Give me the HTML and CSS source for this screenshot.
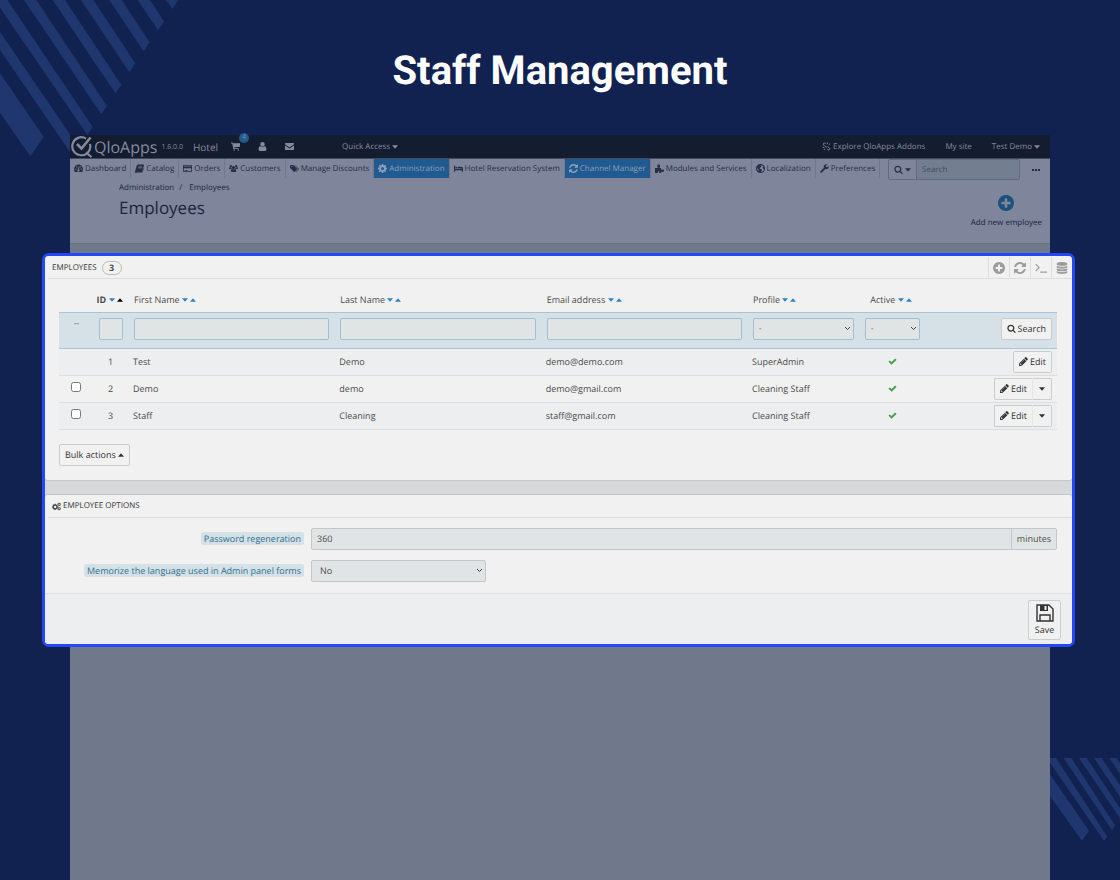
FILE: index.html
```
<!DOCTYPE html>
<html lang="en">
<head>
  <meta charset="UTF-8">
  <meta name="viewport" content="width=device-width, initial-scale=1.0">
  <title>Staff Management</title>
  <link rel="stylesheet" href="styles.css">
</head>
<body>
  <!-- Icon sprite -->
  <svg class="sprite" aria-hidden="true">
    <symbol id="i-search" viewBox="0 0 1792 1792"><path d="M1216 832q0-185-131.500-316.500t-316.500-131.500-316.500 131.500-131.500 316.500 131.500 316.500 316.500 131.500 316.500-131.500 131.500-316.500zm512 832q0 52-38 90t-90 38q-54 0-90-38l-343-342q-179 124-399 124-143 0-273.500-55.500t-225-150-150-225-55.500-273.500 55.500-273.500 150-225 225-150 273.500-55.500 273.500 55.500 225 150 150 225 55.500 273.500q0 220-124 399l343 343q37 37 37 90z"/></symbol>
    <symbol id="i-plus" viewBox="128 128 1536 1536"><path d="M1344 960v-128q0-26-19-45t-45-19h-256v-256q0-26-19-45t-45-19h-128q-26 0-45 19t-19 45v256h-256q-26 0-45 19t-19 45v128q0 26 19 45t45 19h256v256q0 26 19 45t45 19h128q26 0 45-19t19-45v-256h256q26 0 45-19t19-45zm320-64q0 209-103 385.500t-279.500 279.500-385.500 103-385.500-103-279.500-279.500-103-385.500 103-385.500 279.500-279.500 385.500-103 385.500 103 279.500 279.500 103 385.500z"/></symbol>
    <symbol id="i-refresh" viewBox="128 128 1536 1536"><path d="M1639 1056q0 5-1 7-64 268-268 434.500t-478 166.500q-146 0-282.500-55t-243.500-157l-129 129q-19 19-45 19t-45-19-19-45v-448q0-26 19-45t45-19h448q26 0 45 19t19 45-19 45l-137 137q71 66 161 102t187 36q134 0 250-65t186-179q11-17 53-117 8-23 30-23h192q13 0 22.500 9.500t9.500 22.500zm25-800v448q0 26-19 45t-45 19h-448q-26 0-45-19t-19-45 19-45l138-138q-148-137-349-137-134 0-250 65t-186 179q-11 17-53 117-8 23-30 23h-199q-13 0-22.500-9.500t-9.500-22.500v-7q65-268 270-434.500t480-166.500q146 0 284 55.500t245 156.500l130-129q19-19 45-19t45 19 19 45z"/></symbol>
    <symbol id="i-pencil" viewBox="128 128 1536 1536"><path d="M491 1536l91-91-235-235-91 91v107h128v128h107zm523-928q0-22-22-22-10 0-17 7l-542 542q-7 7-7 17 0 22 22 22 10 0 17-7l542-542q7-7 7-17zm-54-192l416 416-832 832h-416v-416zm683 96q0 53-37 90l-166 166-416-416 166-165q36-38 90-38 53 0 91 38l235 234q37 39 37 91z"/></symbol>
    <symbol id="i-check" viewBox="0 0 1792 1792"><path d="M1671 566q0 40-28 68l-724 724-136 136q-28 28-68 28t-68-28l-136-136-362-362q-28-28-28-68t28-68l136-136q28-28 68-28t68 28l294 295 656-657q28-28 68-28t68 28l136 136q28 28 28 68z"/></symbol>
    <symbol id="i-down" viewBox="0 0 10 6"><path d="M0 0h10L5 6z"/></symbol>
    <symbol id="i-up" viewBox="0 0 10 6"><path d="M0 6h10L5 0z"/></symbol>
    <symbol id="i-dash" viewBox="0 0 16 16"><path fill-rule="evenodd" d="M0 9a8 8 0 0 1 16 0c0 2-.5 3.500-1.300 5H1.300C.5 12.500 0 11 0 9zm2 0a1.200 1.200 0 1 0 2.400 0A1.200 1.200 0 0 0 2 9zm1.800-4a1.200 1.200 0 1 0 2.400 0 1.200 1.200 0 0 0-2.400 0zm6.200 0a1.200 1.200 0 1 0 2.400 0A1.200 1.200 0 0 0 10 5zm1.600 4a1.200 1.200 0 1 0 2.400 0 1.200 1.200 0 0 0-2.400 0zM8.300 4.500L7.200 9.600a2 2 0 1 0 1.700.2l.6-5z"/></symbol>
    <symbol id="i-book" viewBox="0 0 16 16"><path fill-rule="evenodd" d="M5 1h10c1 0 1.200.6 1 1.300L13 13c-.2.700-.8 1-1.500 1H3.300c-.6 0-.9.700-.3 1h9.800l2.400-8 .6.800-2.500 7.500c-.2.500-.6.700-1.200.7H2.500C.8 16-.4 14.500.2 12.600L3.300 2.300C3.500 1.500 4.200 1 5 1zm1.200 3l-.3 1h7l.3-1zm-.7 2.400l-.3 1h7l.3-1z"/></symbol>
    <symbol id="i-card" viewBox="0 0 18 16"><path fill-rule="evenodd" d="M1.500 1h15c.8 0 1.500.7 1.500 1.500v11c0 .8-.7 1.500-1.500 1.500h-15C.7 15 0 14.300 0 13.500v-11C0 1.700.7 1 1.500 1zm0 1.300V4h15V2.300zm0 5.200v6h15v-6zM3 11h2v1.300H3zm3 0h3.500v1.300H6z"/></symbol>
    <symbol id="i-users" viewBox="0 0 18 16"><path d="M9 3a3.200 3.200 0 1 1 0 6.400A3.200 3.200 0 0 1 9 3zM3.600 1a2.300 2.300 0 1 1 0 4.600 2.300 2.300 0 0 1 0-4.600zm10.800 0a2.300 2.300 0 1 1 0 4.600 2.300 2.300 0 0 1 0-4.600zM0 8.500C0 6.500.8 5.600 2 5.600c1 .7 2 .7 3 .2-.3 1.300.1 2.400.8 3.200H1.200C.5 9 0 9 0 8.500zm18 0c0-2-.8-2.900-2-2.900-1 .7-2 .7-3 .2.300 1.300-.1 2.400-.8 3.200h4.600c.7 0 1.200 0 1.200-.5zM3.600 13.500C3.600 10.500 4.600 9 6.300 9c1.700 1.400 3.700 1.400 5.400 0 1.700 0 2.700 1.500 2.700 4.500 0 1-.8 1.500-1.700 1.500H5.300c-.9 0-1.700-.5-1.700-1.500z"/></symbol>
    <symbol id="i-tags" viewBox="0 0 18 16"><path fill-rule="evenodd" d="M0 2.300C0 1.600.6 1 1.300 1H6c.8 0 1.500.4 2 .9l6 6c.6.6.6 1.200 0 1.800l-4.600 4.700c-.6.6-1.200.6-1.800 0l-6.700-6.700C.4 7.200 0 6.600 0 6zm2 1.200a1.200 1.200 0 1 0 2.400 0 1.200 1.200 0 0 0-2.400 0zM8.500 1c1 0 1.600.4 2.200.9l6.500 6.300c.6.600.6 1.200 0 1.800l-5 5c-.5.400-1 .3-1.500-.2l4.300-4.300c1-1 1-1.800 0-2.800z"/></symbol>
    <symbol id="i-cog" viewBox="0 0 16 16"><path fill-rule="evenodd" d="M6.700 0h2.600l.4 2.200 1.300.5L12.900 1.400l1.700 1.800-1.200 1.800.5 1.300 2.100.4v2.600l-2.100.4-.5 1.300 1.200 1.900-1.700 1.700-1.900-1.200-1.300.5L9.300 16H6.700l-.4-2.100L5 13.400l-1.900 1.200-1.700-1.700L2.600 11l-.5-1.300L0 9.300V6.700l2.100-.4L2.600 5 1.400 3.200l1.700-1.800L5 2.700l1.300-.5zM8 5.300a2.700 2.700 0 1 0 0 5.400 2.700 2.700 0 0 0 0-5.400z"/></symbol>
    <symbol id="i-cogs" viewBox="0 0 20 18"><path fill-rule="evenodd" d="M5.700 3h2.600l.3 1.700 1.300.5 1.400-1 1.500 1.500-1 1.400.5 1.300 1.700.3v2.600l-1.700.3-.5 1.300 1 1.400-1.500 1.500-1.400-1-1.300.5L8.300 17H5.700l-.3-1.700-1.300-.5-1.400 1-1.500-1.500 1-1.400-.5-1.300L0 11.300V8.700l1.700-.3.500-1.300-1-1.400 1.500-1.500 1.400 1 1.300-.5zM7 7.400a2.600 2.600 0 1 0 0 5.200 2.600 2.600 0 0 0 0-5.200z"/><path fill-rule="evenodd" d="M15 .5h2l.3 1.300 1.600-.3.800 1.500-1 1.200 1 1.200-.8 1.500-1.600-.3L17 8h-2l-.4-1.400-1.500.3-.8-1.500 1-1.200-1-1.200.8-1.500 1.500.3zm1 2.300a1.400 1.400 0 1 0 0 2.800 1.400 1.400 0 0 0 0-2.800zM15 10h2l.3 1.300 1.600-.3.800 1.500-1 1.200 1 1.200-.8 1.500-1.600-.3-.3 1.400h-2l-.4-1.400-1.500.3-.8-1.500 1-1.200-1-1.200.8-1.500 1.500.3zm1 2.300a1.400 1.400 0 1 0 0 2.800 1.400 1.400 0 0 0 0-2.800z"/></symbol>
    <symbol id="i-bed" viewBox="0 0 20 16"><path d="M0 2h2.500v7h15v-2h2.500v8h-2.500v-3h-15v3H0zM3 6a2 2 0 1 1 4 0 2 2 0 0 1-4 0zM8 4h8c2.500 0 4 1.700 4 4H8z"/></symbol>
    <symbol id="i-puzzle" viewBox="0 0 16 16"><path d="M0 7h4.500c.7 0 .8-.5.4-1C4.300 5.300 4 4.700 4 3.500 4 2 5 1 6.500 1S9 2 9 3.500C9 4.700 8.700 5.300 8.200 6c-.4.500-.3 1 .4 1H11v3c0 .8.600.9 1.100.4.500-.4 1-.6 1.700-.6 1.300 0 2.200 1 2.200 2.200s-.9 2.200-2.200 2.200c-.7 0-1.200-.2-1.700-.6-.5-.5-1.100-.4-1.100.4v2H7.500v-2.500c0-1-2.500-1-2.500 0V16H0z"/></symbol>
    <symbol id="i-globe" viewBox="0 0 16 16"><path fill-rule="evenodd" d="M8 0a8 8 0 1 1 0 16A8 8 0 0 1 8 0zm1.500 2L8 3.200l1.300 1-.5 1.600L7 6.500l-.5 1.800 2 .5 2.200 1-.7 2.200-1.700 2.300c3-.3 5.500-2.500 5.900-5.600L12.500 8l-1-1.500 1.700-1.700C12.300 3.300 11 2.300 9.500 2zM2 6.500c-.3 2.500.6 4.500 2.500 6L5 10.500 3.500 9z"/></symbol>
    <symbol id="i-wrench" viewBox="0 0 16 16"><path d="M15.700 3.600c.5 3-1.400 5.800-4.500 5.800-.7 0-1.300-.1-1.900-.4l-6 6.200c-.7.700-1.700.7-2.400 0-.7-.7-.7-1.700 0-2.400l6-6C5.900 3 7.800.3 11.200.3c.9 0 1.600.2 2.300.6l-3 2 .2 2 2 1z"/></symbol>
    <symbol id="i-cart" viewBox="0 0 16 16"><path d="M0 1h2.600c.5 0 .8.400.9 1H16v6.300L5 9.700l.3 1.300H14v1.500H4L2.300 2.500H0zM4.200 14.300a1.400 1.400 0 1 1 2.800 0 1.400 1.400 0 0 1-2.800 0zm7.300 0a1.400 1.400 0 1 1 2.800 0 1.400 1.400 0 0 1-2.800 0z"/></symbol>
    <symbol id="i-user" viewBox="0 0 16 16"><path d="M8 0a4 4 0 1 1 0 8 4 4 0 0 1 0-8zM1 13c0-3.500 1.200-5.400 3.600-5.400 2 1.700 4.800 1.700 6.800 0C13.800 7.600 15 9.500 15 13c0 2-1 3-2.500 3h-9C2 16 1 15 1 13z"/></symbol>
    <symbol id="i-mail" viewBox="0 0 18 14"><path d="M1.500 0h15C17.400 0 18 .7 18 1.500 18 2.500 17.300 3.400 9 9 .7 3.400 0 2.500 0 1.500 0 .7.600 0 1.500 0zM0 4.500C1.500 6 6 9 9 11c3-2 7.500-5 9-6.500v8c0 .8-.7 1.500-1.500 1.500h-15C.7 14 0 13.300 0 12.500z"/></symbol>
    <symbol id="i-addons" viewBox="0 0 16 16"><path fill="none" stroke="currentColor" stroke-width="1.600" d="M7.500 4L6 2.500C4 .5 1 3 2.800 5.200L6 8.500c1 1 2.500.8 3.300 0M8.500 12l1.500 1.500c2 2 5-.5 3.200-2.700L10 7.500M9.500 1v2.500M12 5l2.500-2M1 9.500l3 .5M5 12l-1.500 2.500"/></symbol>
    <symbol id="i-terminal" viewBox="0 0 16 14"><path fill="none" stroke="currentColor" stroke-width="1.500" d="M1 2l4.500 4.500L1 11M7 12.500h9"/></symbol>
    <symbol id="i-database" viewBox="0 0 16 18"><path d="M0 2.500C0 1 3.500 0 8 0s8 1 8 2.500v1C16 5 12.500 6 8 6S0 5 0 3.500zM0 5.500C1.500 6.700 4.500 7.200 8 7.200s6.500-.5 8-1.700v2C16 9 12.500 10 8 10S0 9 0 7.500zm0 4c1.500 1.200 4.500 1.700 8 1.700s6.500-.5 8-1.700v2c0 1.500-3.500 2.500-8 2.500s-8-1-8-2.500zm0 4c1.500 1.200 4.500 1.700 8 1.700s6.500-.5 8-1.700v2c0 1.500-3.500 2.500-8 2.500s-8-1-8-2.500z"/></symbol>
    <symbol id="i-save" viewBox="0 0 18 18"><path fill="none" stroke="currentColor" stroke-width="1.400" d="M1 1h12l4 4v12H1zM4 17v-6h10v6"/><path fill-rule="evenodd" d="M4 1h8v6H4zm4.500 1v4h2V2z"/></symbol>
    <symbol id="i-logo" viewBox="0 0 22 22"><path fill="none" stroke="currentColor" stroke-width="2.200" d="M15 2.600A9 9 0 1 0 19 8M15 16.500l5.500 4.500"/><path fill="none" stroke="currentColor" stroke-width="2.600" d="M6 8l4.500 4.500L19.500 1.500"/></symbol>
  </svg>

  <svg class="stripes stripes-top" viewBox="0 0 600 510" aria-hidden="true">
    <path d="M0 220L131 410 91 469 0 338zM0 95L232 436 214 462 0 150zM0 0H22L278 380 262 405 0 23zM72 0h37L321 318 304 343zM158 0h37L364 254 346 280zM243 0h37L406 190 388 217zM328 0h37L449 127 431 154zM413 0h37L492 64 474 91zM498 0h37L517 27z"/>
  </svg>
  <svg class="stripes stripes-bottom" viewBox="0 0 210 252" aria-hidden="true">
    <path d="M0 49L117 218 96 249 0 114zM0 0H18L172 236 162 249 0 14zM41 0H64L195 202 186 217zM87 0h23L210 151V181zM132 0h23L210 82V116zM178 0h22L210 14V48z"/>
  </svg>

  <h1 class="title">Staff Management</h1>

  <div class="app">
    <header class="topbar">
      <a class="brand" href="#"><svg class="logo"><use href="#i-logo"/></svg>QloApps</a>
      <span class="version">1.6.0.0</span>
      <a class="hotel" href="#">Hotel</a>
      <a class="notif" href="#" aria-label="Orders"><svg class="icon"><use href="#i-cart"/></svg><span class="count">4</span></a>
      <a class="notif" href="#" aria-label="Customers"><svg class="icon"><use href="#i-user"/></svg></a>
      <a class="notif" href="#" aria-label="Messages"><svg class="icon"><use href="#i-mail"/></svg></a>
      <a class="quick" href="#">Quick Access <svg class="caret"><use href="#i-down"/></svg></a>
      <nav class="account">
        <a href="#"><svg class="icon"><use href="#i-addons"/></svg> Explore QloApps Addons</a>
        <a href="#">My site</a>
        <a href="#">Test Demo <svg class="caret"><use href="#i-down"/></svg></a>
      </nav>
    </header>

    <nav class="menu">
      <a href="#"><svg class="icon"><use href="#i-dash"/></svg>Dashboard</a>
      <a href="#"><svg class="icon"><use href="#i-book"/></svg>Catalog</a>
      <a href="#"><svg class="icon"><use href="#i-card"/></svg>Orders</a>
      <a href="#"><svg class="icon"><use href="#i-users"/></svg>Customers</a>
      <a href="#"><svg class="icon"><use href="#i-tags"/></svg>Manage Discounts</a>
      <a class="active" href="#"><svg class="icon"><use href="#i-cog"/></svg>Administration</a>
      <a href="#"><svg class="icon"><use href="#i-bed"/></svg>Hotel Reservation System</a>
      <a class="active" href="#"><svg class="icon"><use href="#i-refresh"/></svg>Channel Manager</a>
      <a href="#"><svg class="icon"><use href="#i-puzzle"/></svg>Modules and Services</a>
      <a href="#"><svg class="icon"><use href="#i-globe"/></svg>Localization</a>
      <a href="#"><svg class="icon"><use href="#i-wrench"/></svg>Preferences</a>
      <form class="menu-search">
        <button type="button" aria-label="Search in"><svg class="icon"><use href="#i-search"/></svg><svg class="caret"><use href="#i-down"/></svg></button>
        <input type="text" placeholder="Search" aria-label="Search">
      </form>
      <button class="more" type="button" aria-label="More"><i></i><i></i><i></i></button>
    </nav>

    <div class="page-head">
      <div>
        <div class="breadcrumb"><a href="#">Administration</a><span>/</span><a href="#">Employees</a></div>
        <h2>Employees</h2>
      </div>
      <a class="add-new" href="#"><svg class="icon"><use href="#i-plus"/></svg>Add new employee</a>
    </div>

    <main class="spotlight">
      <section class="panel">
        <div class="panel-heading">
          <h3>EMPLOYEES</h3><span class="badge">3</span>
          <div class="tools">
            <button type="button" aria-label="Add new"><svg class="icon"><use href="#i-plus"/></svg></button>
            <button type="button" aria-label="Refresh list"><svg class="icon"><use href="#i-refresh"/></svg></button>
            <button type="button" aria-label="Show SQL query"><svg class="icon"><use href="#i-terminal"/></svg></button>
            <button type="button" aria-label="Export to SQL Manager"><svg class="icon"><use href="#i-database"/></svg></button>
          </div>
        </div>

        <table class="list">
          <colgroup>
            <col class="c-check"><col class="c-id"><col><col><col><col class="c-profile"><col class="c-active"><col class="c-actions">
          </colgroup>
          <thead>
            <tr>
              <th></th>
              <th class="center"><b>ID</b> <svg class="sort"><use href="#i-down"/></svg><svg class="sort current"><use href="#i-up"/></svg></th>
              <th>First Name <svg class="sort"><use href="#i-down"/></svg><svg class="sort"><use href="#i-up"/></svg></th>
              <th>Last Name <svg class="sort"><use href="#i-down"/></svg><svg class="sort"><use href="#i-up"/></svg></th>
              <th>Email address <svg class="sort"><use href="#i-down"/></svg><svg class="sort"><use href="#i-up"/></svg></th>
              <th>Profile <svg class="sort"><use href="#i-down"/></svg><svg class="sort"><use href="#i-up"/></svg></th>
              <th class="center">Active <svg class="sort"><use href="#i-down"/></svg><svg class="sort"><use href="#i-up"/></svg></th>
              <th></th>
            </tr>
            <tr class="filter">
              <td class="center">--</td>
              <td><input type="text" aria-label="Filter by ID"></td>
              <td><input type="text" aria-label="Filter by first name"></td>
              <td><input type="text" aria-label="Filter by last name"></td>
              <td><input type="text" aria-label="Filter by email address"></td>
              <td><select aria-label="Filter by profile"><option>-</option></select></td>
              <td><select aria-label="Filter by active"><option>-</option></select></td>
              <td class="actions"><button class="btn" type="button"><svg class="icon"><use href="#i-search"/></svg>Search</button></td>
            </tr>
          </thead>
          <tbody>
            <tr>
              <td></td>
              <td class="center">1</td>
              <td>Test</td>
              <td>Demo</td>
              <td>demo@demo.com</td>
              <td>SuperAdmin</td>
              <td class="center"><svg class="icon check"><use href="#i-check"/></svg></td>
              <td class="actions"><button class="btn" type="button"><svg class="icon"><use href="#i-pencil"/></svg>Edit</button></td>
            </tr>
            <tr>
              <td class="center"><input type="checkbox" aria-label="Select employee 2"></td>
              <td class="center">2</td>
              <td>Demo</td>
              <td>demo</td>
              <td>demo@gmail.com</td>
              <td>Cleaning Staff</td>
              <td class="center"><svg class="icon check"><use href="#i-check"/></svg></td>
              <td class="actions"><div class="btn-group"><button class="btn" type="button"><svg class="icon"><use href="#i-pencil"/></svg>Edit</button><button class="btn" type="button" aria-label="More actions"><svg class="caret"><use href="#i-down"/></svg></button></div></td>
            </tr>
            <tr>
              <td class="center"><input type="checkbox" aria-label="Select employee 3"></td>
              <td class="center">3</td>
              <td>Staff</td>
              <td>Cleaning</td>
              <td>staff@gmail.com</td>
              <td>Cleaning Staff</td>
              <td class="center"><svg class="icon check"><use href="#i-check"/></svg></td>
              <td class="actions"><div class="btn-group"><button class="btn" type="button"><svg class="icon"><use href="#i-pencil"/></svg>Edit</button><button class="btn" type="button" aria-label="More actions"><svg class="caret"><use href="#i-down"/></svg></button></div></td>
            </tr>
          </tbody>
        </table>

        <button class="btn bulk" type="button">Bulk actions <svg class="caret"><use href="#i-up"/></svg></button>
      </section>

      <form class="panel">
        <div class="panel-heading">
          <svg class="icon"><use href="#i-cogs"/></svg><h3>EMPLOYEE OPTIONS</h3>
        </div>
        <div class="options">
          <label for="regen">Password regeneration</label>
          <div class="input-group">
            <input type="text" id="regen" value="360">
            <span>minutes</span>
          </div>
          <label for="lang">Memorize the language used in Admin panel forms</label>
          <select id="lang"><option>No</option><option>Yes</option></select>
        </div>
        <div class="panel-footer">
          <button class="btn save" type="button"><svg class="icon"><use href="#i-save"/></svg>Save</button>
        </div>
      </form>
    </main>
  </div>
</body>
</html>
```
FILE: styles.css
```
* {
  box-sizing: border-box;
}

body {
  font-family: "Open Sans", sans-serif;
  font-size: 8px;
  line-height: 12px;
  text-rendering: geometricPrecision;
  color: #4b4b4b;
  background-color: #112150;
  margin: 0;
  min-height: 100vh;
  display: flex;
  flex-direction: column;
  position: relative;
}

a {
  color: inherit;
  text-decoration: none;
}

button,
input,
select {
  font-family: inherit;
  font-size: inherit;
  line-height: inherit;
  color: inherit;
  text-rendering: inherit;
  margin: 0;
}

svg {
  fill: currentColor;
  flex-shrink: 0;
}

.sprite {
  position: absolute;
  width: 0;
  height: 0;
}

.icon {
  width: 9px;
  height: 9px;
}

.caret {
  width: 6px;
  height: 4px;
}

/* Background decoration */
.stripes {
  position: absolute;
  fill: #20366f;
}

.stripes-top {
  top: 0;
  left: 0;
  width: 200px;
  height: 170px;
}

.stripes-bottom {
  right: 0;
  bottom: 38px;
  width: 70px;
  height: 84px;
}

.title {
  font-family: Roboto, sans-serif;
  font-size: 40px;
  line-height: 48px;
  font-weight: 700;
  color: #fff;
  text-align: center;
  margin: 47px 0 40px;
}

/* Back office */
.app {
  flex: 1;
  margin: 0 70px;
  background-color: #70788c;
  position: relative;
}

.topbar {
  display: flex;
  align-items: center;
  height: 24px;
  padding-left: 1px;
  background-color: #141c30;
  border-bottom: 1px solid #434a5f;
  color: #858b9c;
}

.brand {
  display: flex;
  align-items: center;
  font-size: 16px;
  line-height: 22px;
  gap: 1px;
}

.logo {
  width: 22px;
  height: 22px;
}

.version {
  font-size: 7px;
  margin: 2px 10px 0 4px;
}

.hotel {
  font-size: 10px;
  margin-right: 13px;
}

.notif {
  position: relative;
  display: flex;
  margin-right: 18px;
}

.count {
  position: absolute;
  top: -9px;
  left: 8px;
  width: 10px;
  height: 10px;
  border-radius: 50%;
  background-color: #1f5a90;
  font-size: 7px;
  line-height: 10px;
  text-align: center;
}

.quick {
  margin-left: 30px;
}

.account {
  display: flex;
  gap: 20px;
  margin-left: auto;
  padding-right: 10px;
}

.account a {
  display: flex;
  align-items: center;
  gap: 2px;
}

.menu {
  display: flex;
  background-color: #7f859a;
  color: #272e48;
}

.menu > a {
  display: flex;
  align-items: center;
  gap: 2px;
  height: 19px;
  padding: 0 4px;
  border-right: 1px solid #71788d;
  white-space: nowrap;
}

.menu .active {
  background-color: #1f5a90;
  color: #8f9eb6;
}

.menu-search {
  display: flex;
  width: 132px;
  height: 21px;
  margin-left: auto;
  border: 1px solid #636b81;
  border-radius: 2px;
}

.menu-search button {
  display: flex;
  align-items: center;
  gap: 2px;
  padding: 0 5px;
  border: 0;
  border-right: 1px solid #636b81;
  background: none;
}

.menu-search input {
  flex: 1;
  min-width: 0;
  padding: 0 5px;
  border: 0;
  background-color: #747e91;
}

.menu-search input::placeholder {
  color: #434b63;
}

.more {
  display: flex;
  align-items: center;
  gap: 1px;
  padding: 0;
  margin: 0 10px 0 12px;
  border: 0;
  background: none;
}

.more i {
  width: 2px;
  height: 2px;
  background-color: #272e48;
}

.page-head {
  display: flex;
  justify-content: space-between;
  height: 64px;
  padding: 2px 8px 0 49px;
  background-color: #7f859a;
  border-bottom: 1px solid #676f83;
  color: #1c2440;
}

.breadcrumb {
  display: flex;
  gap: 5px;
}

.breadcrumb a:last-child {
  margin-left: 2px;
}

.page-head h2 {
  font-size: 17px;
  line-height: 24px;
  font-weight: 400;
  margin: 2px 0 0;
}

.add-new {
  display: flex;
  flex-direction: column;
  align-items: center;
  gap: 6px;
  padding-top: 13px;
}

.add-new .icon {
  width: 16px;
  height: 16px;
  color: #1b527d;
}

/* Highlighted area */
.spotlight {
  display: flex;
  flex-direction: column;
  gap: 15px;
  margin: 9px -25px 0 -28px;
  border: 3px solid #2548f4;
  border-radius: 7px;
  background-color: #d7d8da;
  overflow: hidden;
}

.panel {
  background-color: #f1f1f1;
  border-radius: 3px;
  box-shadow: 0 0 0 1px #c6c8ca;
}

.panel-heading {
  display: flex;
  align-items: center;
  gap: 2px;
  height: 23px;
  margin-left: 3px;
  padding: 1px 0 0 4px;
  border-bottom: 1px solid #dcdddf;
}

.panel-heading h3 {
  font-size: 8px;
  font-weight: 400;
  color: #333;
  margin: 0;
}

.badge {
  width: 20px;
  height: 14px;
  margin-left: 3px;
  border: 1px solid #bbb;
  border-radius: 7px;
  font-size: 9px;
  font-weight: 700;
  text-align: center;
}

.tools {
  display: flex;
  align-self: stretch;
  margin-left: auto;
  color: #9c9c9c;
}

.tools button {
  display: flex;
  align-items: center;
  justify-content: center;
  width: 21px;
  padding: 0;
  border: 0;
  border-left: 1px solid #dcdddf;
  background: none;
}

.tools .icon {
  width: 12px;
  height: 12px;
}

.list {
  width: calc(100% - 29px);
  margin: 10px 15px 0 14px;
  border-collapse: collapse;
  table-layout: fixed;
}

.list tbody {
  font-size: 9px;
}

.c-check { width: 34px; }
.c-id { width: 35px; }
.c-profile { width: 112px; }
.c-active { width: 66px; }
.c-actions { width: 132px; }

.list th,
.list td {
  height: 27px;
  padding: 0 5px;
  text-align: left;
  font-weight: 400;
}

.list th {
  height: 23px;
  padding: 0 6px;
  font-size: 9px;
  white-space: nowrap;
}

.list .center {
  text-align: center;
}

.list th.center {
  padding: 0;
}

.sort {
  width: 6px;
  height: 4px;
  margin: 0 2px 1px 0;
  color: #2b83c0;
}

.sort.current {
  color: #000;
}

.list .filter {
  background-color: #d5e0e7;
  border-top: 1px solid #a6c5d6;
  border-bottom: 1px solid #a6c5d6;
}

.list .filter td {
  height: 36px;
  padding: 5px 5px 0 6px;
  vertical-align: top;
}

.filter input,
.filter select {
  display: block;
  width: 100%;
  height: 22px;
  padding: 0 5px;
  border: 1px solid #a0c0d2;
  border-radius: 2px;
  background-color: #e0e4e4;
}

/* Thin chevron instead of the native arrow */
select {
  appearance: none;
  background-image: url("data:image/svg+xml,%3Csvg xmlns='http://www.w3.org/2000/svg' viewBox='0 0 7 5'%3E%3Cpath fill='none' stroke='%23444' d='M1 1l2.500 2.500L6 1'/%3E%3C/svg%3E");
  background-repeat: no-repeat;
  background-position: right 2px center;
  background-size: 7px 5px;
}

.list tbody tr {
  border-bottom: 1px solid #dcdee1;
}

.list tbody tr:nth-child(odd) {
  background-color: #edeef0;
}

.list input[type="checkbox"] {
  display: block;
  width: 10px;
  height: 10px;
  margin: 0 auto 3px;
}

.check {
  display: block;
  margin: 0 auto;
  color: #4a9e54;
}

.list .actions {
  text-align: right;
}

.btn {
  display: inline-flex;
  align-items: center;
  gap: 2px;
  height: 22px;
  padding: 0 5px;
  border: 1px solid #cbcccd;
  border-radius: 2px;
  background-color: #f1f1f1;
  color: #333;
  font-size: 9px;
  vertical-align: middle;
}

.btn-group {
  display: inline-flex;
  vertical-align: middle;
}

.btn-group .btn:first-child {
  border-right-color: #e6e6e6;
  border-radius: 2px 0 0 2px;
}

.btn-group .btn:last-child {
  padding: 0 6px;
  border-left: 0;
  border-radius: 0 2px 2px 0;
}

.bulk {
  margin: 14px 14px 14px;
}

.options {
  display: grid;
  grid-template-columns: 259px 1fr;
  gap: 10px 7px;
  padding: 10px 15px 11px 0;
  align-items: center;
  font-size: 9px;
}

.options label {
  justify-self: end;
  padding: 0 3px;
  border-radius: 2px;
  background-color: #d4e1e7;
  color: #31708f;
  line-height: 13px;
}

.options select,
.input-group {
  height: 22px;
  border: 1px solid #c1c8cb;
  border-radius: 2px;
  background-color: #e0e4e4;
}

.options select {
  width: 175px;
  padding: 0 8px;
}

.input-group {
  display: flex;
  align-items: center;
}

.input-group input {
  flex: 1;
  height: 100%;
  min-width: 0;
  padding: 0 5px;
  border: 0;
  border-right: 1px solid #c1c8cb;
  background: none;
}

.input-group span {
  padding: 0 5px;
}

.panel-footer {
  display: flex;
  justify-content: flex-end;
  padding: 6px 11px 4px;
  border-top: 1px solid #dfe0e2;
  background-color: #edeef0;
}

.save {
  flex-direction: column;
  justify-content: center;
  width: 33px;
  height: 40px;
  padding: 0;
}

.save .icon {
  width: 18px;
  height: 18px;
}
```
